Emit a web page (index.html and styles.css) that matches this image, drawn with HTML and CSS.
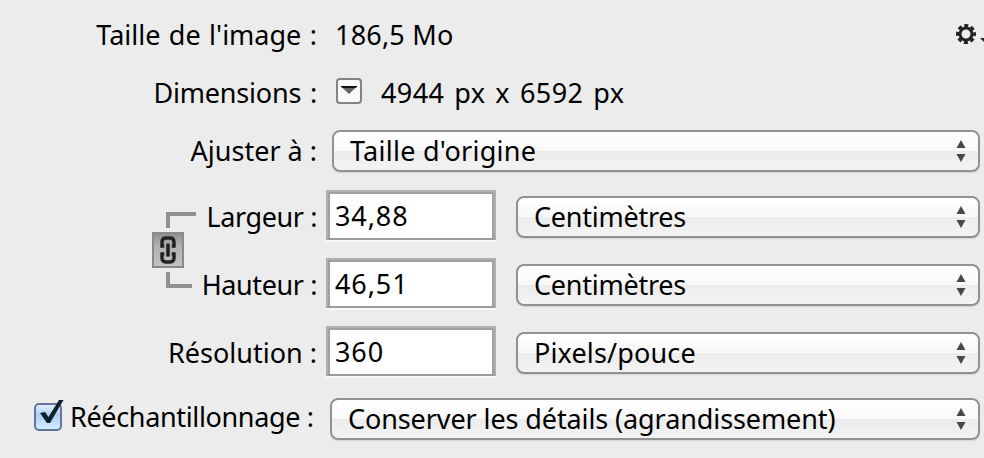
FILE: index.html
```
<!DOCTYPE html>
<html lang="fr">
<head>
    <meta charset="utf-8">
    <title>Taille de l'image</title>
    <link rel="stylesheet" href="styles.css">
</head>
<body>
    <div class="row info">
        <span class="label t-size">Taille de l'image :</span>
        <span class="value v-size">186,5 Mo</span>
        <svg class="gear" width="28" height="22" viewBox="0 0 28 22">
            <circle cx="10" cy="11" r="6" fill="none" stroke="#222" stroke-width="3"/>
            <circle cx="10" cy="11" r="8.4" fill="none" stroke="#222" stroke-width="3.2" stroke-dasharray="4 2.597" stroke-dashoffset="2"/>
            <path d="M24 15h8l-4 4z" fill="#222"/>
        </svg>
    </div>
    <div class="row info">
        <span class="label t-dim">Dimensions :</span>
        <span class="drop"><svg width="26" height="26" viewBox="0 0 26 26"><path d="M4.500 8h17L13 16z" fill="#666"/><path d="M4.500 8h17l-2 2h-13z" fill="#111"/></svg></span>
        <span class="value v-dim">4944 px x 6592 px</span>
    </div>
    <div class="row info">
        <span class="label t-fit">Ajuster à :</span>
        <div class="popup wide"><span class="p-fit">Taille d'origine</span><svg class="arrows" width="10" height="22" viewBox="0 0 10 22"><path d="M.5 8L5 0l4.500 8zM.5 14h9L5 22z"/></svg></div>
    </div>

    <!-- width and height are tied together by the chain button -->
    <div class="linked">
        <div class="row">
            <span class="label t-width">Largeur :</span>
            <input class="field" type="text" value="34,88">
            <div class="popup"><span class="p-cm">Centimètres</span><svg class="arrows" width="10" height="22" viewBox="0 0 10 22"><path d="M.5 8L5 0l4.500 8zM.5 14h9L5 22z"/></svg></div>
        </div>
        <div class="row">
            <span class="label t-height">Hauteur :</span>
            <input class="field" type="text" value="46,51">
            <div class="popup"><span class="p-cm">Centimètres</span><svg class="arrows" width="10" height="22" viewBox="0 0 10 22"><path d="M.5 8L5 0l4.500 8zM.5 14h9L5 22z"/></svg></div>
        </div>
        <svg class="chain" width="44" height="78" viewBox="0 0 44 78">
            <defs>
                <linearGradient id="plate" x1="0" y1="0" x2="0" y2="1">
                    <stop offset="0" stop-color="#8d8d8d"/>
                    <stop offset=".35" stop-color="#b0b0b0"/>
                    <stop offset="1" stop-color="#c2c2c2"/>
                </linearGradient>
            </defs>
            <path d="M16 16V2h28M16 60v14h24" fill="none" stroke="#919191" stroke-width="4"/>
            <rect x="1" y="21" width="30" height="34" fill="url(#plate)" stroke="#8a8a8a" stroke-width="2"/>
            <path d="M12.500 34H10v-4q0-4 4-4h4q4 0 4 4v4h-2.500M12.500 42H10v4q0 4 4 4h4q4 0 4-4v-4h-2.500" fill="none" stroke="#222" stroke-width="3.4"/>
            <path d="M16 31v14" stroke="#b4b4b4" stroke-width="7"/>
            <path d="M16 31.500v13" stroke="#222" stroke-width="3.600"/>
        </svg>
    </div>
    <div class="row">
        <span class="label t-res">Résolution :</span>
        <input class="field" type="text" value="360">
        <div class="popup"><span class="p-ppi">Pixels/pouce</span><svg class="arrows" width="10" height="22" viewBox="0 0 10 22"><path d="M.5 8L5 0l4.500 8zM.5 14h9L5 22z"/></svg></div>
    </div>
    <div class="row last">
        <span class="label t-resample">
            <svg class="check" width="32" height="34" viewBox="0 0 32 34">
                <defs>
                    <linearGradient id="blue" x1="0" y1="0" x2="0" y2="1">
                        <stop offset="0" stop-color="#e6f0fa"/>
                        <stop offset=".45" stop-color="#abcff1"/>
                        <stop offset="1" stop-color="#d3f2ff"/>
                    </linearGradient>
                </defs>
                <rect x="2" y="5" width="26" height="26" rx="4" fill="url(#blue)" stroke="#65749a" stroke-width="2"/>
                <path d="M7 14l5-1 3.500 5L26 1h4.500L17 24h-3z" fill="#0d1f30"/>
            </svg>Rééchantillonnage :</span>
        <div class="popup wide"><span class="p-keep">Conserver les détails (agrandissement)</span><svg class="arrows" width="10" height="22" viewBox="0 0 10 22"><path d="M.5 8L5 0l4.500 8zM.5 14h9L5 22z"/></svg></div>
    </div>
</body>
</html>
```
FILE: styles.css
```
*{
    box-sizing:border-box;
}
body{
    margin:0;
    padding-top:6px;
    width:984px;
    height:458px;
    overflow:hidden;
    background-color:#ececec;
    color:#000;
    font-family:"Noto Sans", sans-serif;
    font-size:27px;
    line-height:38px;
}
.row{
    display:flex;
    align-items:center;
    height:68px;
    white-space:nowrap;
}
.info{
    height:58px;
}
.linked{
    position:relative;
    margin-top:3px;
}
.last{
    height:64px;
}
.label{
    flex:none;
    width:317px;
    margin-right:1px;
    text-align:right;
}
.value{
    margin-left:17px;
}
.gear{
    margin-left:auto;
    margin-top:-2px;
}
.drop{
    display:flex;
    flex:none;
    width:26px;
    height:26px;
    margin:-4px 2px 0 18px;
    border:2px solid #838383;
    border-radius:4px;
    background-color:#fafafa;
}
.drop svg{
    margin:-2px;
}
.field{
    width:170px;
    height:50px;
    margin:-4px 20px 0 8px;
    padding:1px 7px 0;
    border:2px solid #b0b0b0;
    border-bottom-color:#9c9c9c;
    box-shadow:inset 2px 2px 0 #a0a0a0, inset -2px 0 0 #a0a0a0, 0 2px 0 #f8f8f8;
    background-color:#fff;
    font:inherit;
    color:inherit;
    letter-spacing:0.9px;
    outline:none;
}
.popup{
    display:flex;
    align-items:center;
    justify-content:space-between;
    width:464px;
    height:42px;
    padding:0 12px 0 16px;
    border:2px solid #929292;
    border-radius:8px;
    background:linear-gradient(#fff 0%, #f8f8f8 50%, #ececec 51%, #f3f3f3 100%);
    box-shadow:0 1px 1px #d4d4d4;
}
.wide{
    width:648px;
    margin-left:14px;
}
.last .wide{
    width:650px;
    margin-left:12px;
}
.arrows{
    fill:#484848;
}
.chain{
    position:absolute;
    left:152px;
    top:29px;
}

/* text spacing */
.t-size{
    word-spacing:1.4px;
}
.v-size{
    letter-spacing:0.2px;
}
.v-dim{
    letter-spacing:0.4px;
    word-spacing:2.5px;
}
.t-dim{
    letter-spacing:-0.2px;
    word-spacing:2px;
}
.t-width, .t-height{
    letter-spacing:-0.4px;
}
.p-fit{
    letter-spacing:0.25px;
}
.p-cm{
    letter-spacing:-0.25px;
}
.p-ppi{
    letter-spacing:0.15px;
}
.p-keep{
    letter-spacing:-0.1px;
}
.t-resample{
    display:flex;
    align-items:center;
    padding-left:33px;
    margin-top:-4px;
    letter-spacing:-0.35px;
}
.check{
    flex:none;
    margin-right:5px;
    margin-top:-3px;
}
```
